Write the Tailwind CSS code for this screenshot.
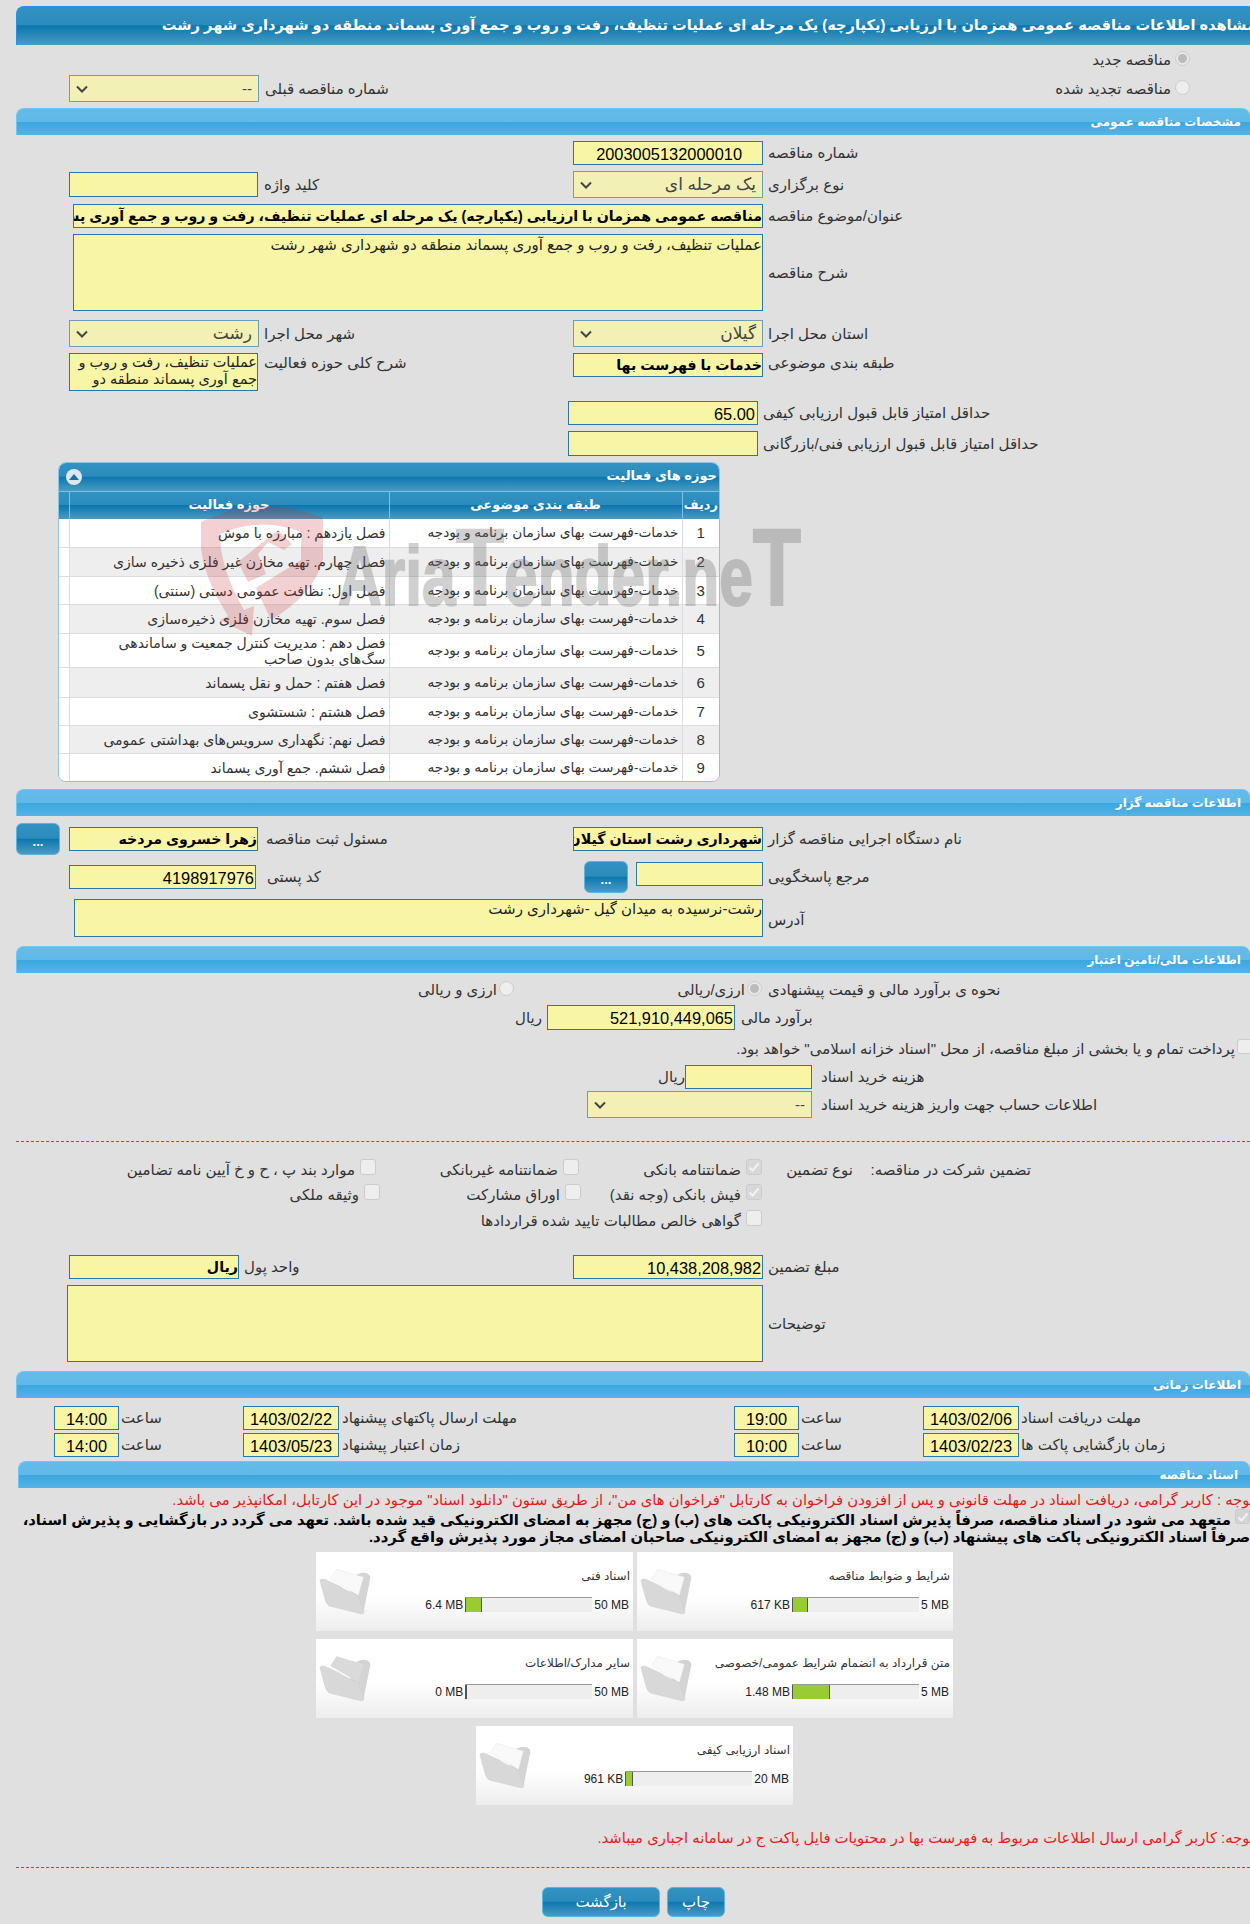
<!DOCTYPE html>
<html lang="fa" dir="rtl">
<head>
  <meta charset="UTF-8" />
  <title>مشاهده اطلاعات مناقصه</title>
  <script src="https://cdn.jsdelivr.net/npm/@tailwindcss/browser@4"></script>
</head>
<body class="bg-[#e0e0e0]">
<div class="relative w-[1250px] h-[1924px] overflow-hidden bg-[#e0e0e0] text-[#333] text-[15px] leading-[18px] font-['Liberation_Sans','DejaVu_Sans',sans-serif]">

  <!-- page title -->
  <div class="mt-[6px] ml-4 -mr-[6px] h-[39px] rounded-t-[8px] border-t border-l border-[#2a8fe0] bg-[linear-gradient(#3292c1_0%,#2b8cbc_48%,#0a76ae_49%,#4b9bc3_100%)] text-white font-bold text-[14.6px] leading-[36px] whitespace-nowrap overflow-hidden">مشاهده اطلاعات مناقصه عمومی همزمان با ارزیابی (یکپارچه) یک مرحله ای عملیات تنظیف، رفت و روب و جمع آوری پسماند منطقه دو شهرداری شهر رشت</div>

  <div class="flex h-[63px]">
    <div class="pr-[60px] pt-0 w-[500px]">
      <div class="flex items-center h-[29px] gap-[4px]"><span class="w-[15px] h-[15px] -mt-[3px] rounded-full border border-[#ccc] bg-[#e8e8e8] flex items-center justify-center"><span class="w-[9px] h-[9px] rounded-full bg-[#bbb]"></span></span><span>مناقصه جدید</span></div>
      <div class="flex items-center h-[29px] gap-[4px]"><span class="w-[15px] h-[15px] -mt-[3px] rounded-full border border-[#ccc] bg-[#eee]"></span><span>مناقصه تجدید شده</span></div>
    </div>
    <div class="mr-[241px] mt-[30px] grid grid-cols-[auto_190px] w-[440px] h-[27px]">
      <div class="text-left pl-[6px] self-center"><span>شماره مناقصه قبلی</span></div>
      <div class="h-[27px] border border-[#6d9cb8] bg-[#f3f0b5] text-[#444] flex items-center justify-between pr-[6px] pl-[6px]"><span>--</span><svg width="12" height="8" viewBox="0 0 12 8"><path d="M1 1.5 6 6.5 11 1.5" fill="none" stroke="#444" stroke-width="2"/></svg></div>
    </div>
  </div>

  <div class="ml-4 h-[27px] rounded-t-[8px] border-t border-l border-[#6fc6f0] bg-[linear-gradient(#64bbe9_0%,#60b9e8_49%,#3aa7e0_50%,#55b3e5_100%)] text-white font-bold text-[12px] leading-[26px] pr-[9px]">مشخصات مناقصه عمومی</div>

  <div class="grid grid-cols-[487px_190px] mt-[6px] h-[24px]">
    <div class="text-left pl-[5px] self-center">شماره مناقصه</div>
    <div class="h-[24px] border border-[#2a76ad] bg-[#f8f6a5] text-black text-[16.4px] leading-[24px] pr-[20px] text-right">2003005132000010</div>
  </div>

  <div class="grid grid-cols-[487px_190px_314px_190px] mt-[6px] h-[27px]">
    <div class="text-left pl-[5px] self-center">نوع برگزاری</div>
    <div class="h-[27px] border border-[#6d9cb8] bg-[#f3f0b5] text-[#444] text-[17px] flex items-center justify-between px-[6px]"><span>یک مرحله ای</span><svg width="12" height="8" viewBox="0 0 12 8"><path d="M1 1.5 6 6.5 11 1.5" fill="none" stroke="#444" stroke-width="2"/></svg></div>
    <div class="text-left pl-[5px] self-center">کلید واژه</div>
    <div class="h-[25px] w-[189px] self-center justify-self-end border border-[#2a76ad] bg-[#f8f6a5]"></div>
  </div>

  <div class="grid grid-cols-[487px_690px] mt-[6px] h-[24px]">
    <div class="text-left pl-[5px] self-center">عنوان/موضوع مناقصه</div>
    <div class="h-[24px] border border-[#2a76ad] bg-[#f8f6a5] text-black font-bold text-[14.2px] leading-[22px] overflow-hidden whitespace-nowrap">مناقصه عمومی همزمان با ارزیابی (یکپارچه) یک مرحله ای عملیات تنظیف، رفت و روب و جمع آوری پسماند منطقه دو شهرداری شهر رشت</div>
  </div>

  <div class="grid grid-cols-[487px_690px] mt-[6px] h-[77px]">
    <div class="text-left pl-[5px] self-center">شرح مناقصه</div>
    <div class="h-[77px] border border-[#2a76ad] bg-[#f8f6a5] text-[#222] leading-[20px]">عملیات تنظیف، رفت و روب و جمع آوری پسماند منطقه دو شهرداری شهر رشت</div>
  </div>

  <div class="grid grid-cols-[487px_190px_314px_190px] mt-[9px] h-[27px]">
    <div class="text-left pl-[5px] self-center">استان محل اجرا</div>
    <div class="h-[27px] border border-[#6d9cb8] bg-[#f3f0b5] text-[#444] text-[17px] flex items-center justify-between px-[6px]"><span>گیلان</span><svg width="12" height="8" viewBox="0 0 12 8"><path d="M1 1.5 6 6.5 11 1.5" fill="none" stroke="#444" stroke-width="2"/></svg></div>
    <div class="text-left pl-[5px] self-center">شهر محل اجرا</div>
    <div class="h-[27px] border border-[#6d9cb8] bg-[#f3f0b5] text-[#444] text-[17px] flex items-center justify-between px-[6px]"><span>رشت</span><svg width="12" height="8" viewBox="0 0 12 8"><path d="M1 1.5 6 6.5 11 1.5" fill="none" stroke="#444" stroke-width="2"/></svg></div>
  </div>

  <div class="grid grid-cols-[487px_190px_314px_190px] mt-[6px] h-[38px]">
    <div class="text-left pl-[5px] pt-[1px]">طبقه بندی موضوعی</div>
    <div class="h-[24px] border border-[#2a76ad] bg-[#f8f6a5] text-black font-bold text-[14.2px] leading-[22px] overflow-hidden whitespace-nowrap">خدمات با فهرست بها</div>
    <div class="text-left pl-[5px] pt-[1px]">شرح کلی حوزه فعالیت</div>
    <div class="h-[38px] w-[189px] justify-self-end border border-[#2a76ad] bg-[#f8f6a5] text-[#222] text-[14.5px] leading-[17px] overflow-hidden">عملیات تنظیف، رفت و روب و جمع آوری پسماند منطقه دو</div>
  </div>

  <div class="grid grid-cols-[492px_190px] mt-[10px] h-[24px]">
    <div class="text-left pl-[5px] self-center">حداقل امتیاز قابل قبول ارزیابی کیفی</div>
    <div class="h-[24px] border border-[#2a76ad] bg-[#f8f6a5] text-black text-[16.4px] leading-[24px] px-[2px]" dir="ltr"><span class="block text-right">65.00</span></div>
  </div>
  <div class="grid grid-cols-[492px_190px] mt-[6px] h-[25px]">
    <div class="text-left pl-[5px] self-center">حداقل امتیاز قابل قبول ارزیابی فنی/بازرگانی</div>
    <div class="h-[25px] border border-[#2a76ad] bg-[#f8f6a5]"></div>
  </div>

  <!-- activity table -->
  <div class="relative mt-[6px] mr-[530px] w-[662px] h-[320px] rounded-[8px] border border-[#8cc4e8] overflow-hidden bg-white">
    <div class="h-[28px] flex items-center justify-between px-[2px] bg-[linear-gradient(#3292c1_0%,#2b8cbc_48%,#0a76ae_49%,#4b9bc3_100%)] text-white font-bold text-[13px]">
      <span class="pb-[2px]">حوزه های فعالیت</span>
      <span class="w-[16px] h-[16px] ml-[5px] rounded-full bg-[#dfe6ef] flex items-center justify-center"><svg width="10" height="6" viewBox="0 0 10 6"><path d="M5 0 10 6H0Z" fill="#1c6fa6"/></svg></span>
    </div>
    <table class="w-full table-fixed border-collapse">
      <thead>
        <tr class="h-[27px] bg-[linear-gradient(#3292c1_0%,#2b8cbc_48%,#0a76ae_49%,#4b9bc3_100%)] text-white font-bold text-[13px]">
          <th class="w-[37px] border-l border-t border-[#7cc0ea] font-bold">ردیف</th>
          <th class="w-[293px] border-l border-t border-[#7cc0ea] font-bold">طبقه بندی موضوعی</th>
          <th class="w-[320px] border-l border-t border-[#7cc0ea] font-bold">حوزه فعالیت</th>
          <th class="border-t border-[#7cc0ea]"></th>
        </tr>
      </thead>
      <tbody id="rows"></tbody>
    </table>
  </div>

  <div class="mt-[7px] ml-4 h-[27px] rounded-t-[8px] border-t border-l border-[#6fc6f0] bg-[linear-gradient(#64bbe9_0%,#60b9e8_49%,#3aa7e0_50%,#55b3e5_100%)] text-white font-bold text-[12px] leading-[26px] pr-[9px]">اطلاعات مناقصه گزار</div>

  <div class="grid grid-cols-[487px_190px_314px_190px_9px_44px] mt-[7px] h-[32px] items-center">
    <div class="text-left pl-[5px]">نام دستگاه اجرایی مناقصه گزار</div>
    <div class="h-[24px] border border-[#2a76ad] bg-[#f8f6a5] text-black font-bold text-[14.2px] leading-[22px] overflow-hidden whitespace-nowrap">شهرداری رشت استان گیلان</div>
    <div class="text-left pl-[7px]">مسئول ثبت مناقصه</div>
    <div class="h-[24px] w-[189px] justify-self-end border border-[#2a76ad] bg-[#f8f6a5] text-black font-bold text-[14.2px] leading-[22px] overflow-hidden whitespace-nowrap">زهرا خسروی مردخه</div>
    <div></div>
    <div class="h-[32px] rounded-[6px] border border-[#5cb4de] bg-[linear-gradient(#3292c1_0%,#2b8cbc_48%,#0a76ae_49%,#4b9bc3_100%)] text-white font-bold text-[13px] text-center leading-[36px]">...</div>
  </div>

  <div class="grid grid-cols-[487px_127px_8px_44px_328px_187px] mt-[6px] h-[32px]">
    <div class="text-left pl-[5px] self-center">مرجع پاسخگویی</div>
    <div class="h-[24px] mt-[1px] border border-[#2a76ad] bg-[#f8f6a5]"></div>
    <div></div>
    <div class="h-[32px] rounded-[6px] border border-[#5cb4de] bg-[linear-gradient(#3292c1_0%,#2b8cbc_48%,#0a76ae_49%,#4b9bc3_100%)] text-white font-bold text-[13px] text-center leading-[36px]">...</div>
    <div class="text-left pl-[11px] self-center">کد پستی</div>
    <div class="h-[24px] self-center border border-[#2a76ad] bg-[#f8f6a5] text-black text-[16.4px] leading-[24px] px-[1px]">4198917976</div>
  </div>

  <div class="grid grid-cols-[487px_689px] mt-[6px] h-[38px]">
    <div class="text-left pl-[5px] pt-[12px]">آدرس</div>
    <div class="h-[38px] border border-[#2a76ad] bg-[#f8f6a5] text-[#222]">رشت-نرسیده به میدان گیل -شهرداری رشت</div>
  </div>

  <div class="mt-[9px] ml-4 h-[27px] rounded-t-[8px] border-t border-l border-[#6fc6f0] bg-[linear-gradient(#64bbe9_0%,#60b9e8_49%,#3aa7e0_50%,#55b3e5_100%)] text-white font-bold text-[12px] leading-[26px] pr-[9px]">اطلاعات مالی/تامین اعتبار</div>

  <div class="grid grid-cols-[482px_250px_auto] mt-[8px] h-[17px] items-center">
    <div class="text-left pl-0">نحوه ی برآورد مالی و قیمت پیشنهادی</div>
    <div class="flex items-center gap-[2px] pr-[6px]"><span class="w-[15px] h-[15px] -mt-[3px] rounded-full border border-[#ccc] bg-[#e8e8e8] flex items-center justify-center"><span class="w-[9px] h-[9px] rounded-full bg-[#bbb]"></span></span><span>ارزی/ریالی</span></div>
    <div class="flex items-center gap-[2px] pr-[4px]"><span class="w-[15px] h-[15px] -mt-[3px] rounded-full border border-[#ccc] bg-[#eee]"></span><span>ارزی و ریالی</span></div>
  </div>

  <div class="grid grid-cols-[515px_188px_auto] mt-[7px] h-[25px] items-center">
    <div class="text-left pl-[6px]">برآورد مالی</div>
    <div class="h-[25px] border border-[#2a76ad] bg-[#f8f6a5] text-black text-[16.4px] leading-[24px] px-[1px]" dir="ltr"><span class="block text-right">521,910,449,065</span></div>
    <div class="pr-[5px]">ریال</div>
  </div>

  <div class="flex mt-[8px] h-[22px] items-center -mr-[2px] gap-[2px]">
    <span class="w-[15px] h-[15px] -mt-[6px] rounded-[3px] border border-[#ccc] bg-[#eee]"></span>
    <span>پرداخت تمام و یا بخشی از مبلغ مناقصه، از محل "اسناد خزانه اسلامی" خواهد بود.</span>
  </div>

  <div class="grid grid-cols-[438px_127px_auto] mt-[5px] h-[24px] items-center">
    <div class="text-left pl-[9px]">هزینه خرید اسناد</div>
    <div class="h-[24px] border border-[#2a76ad] bg-[#f8f6a5]"></div>
    <div>ریال</div>
  </div>

  <div class="grid grid-cols-[438px_225px] mt-[2px] h-[27px] items-center">
    <div class="text-left pl-[9px]">اطلاعات حساب جهت واریز هزینه خرید اسناد</div>
    <div class="h-[27px] border border-[#6d9cb8] bg-[#f3f0b5] text-[#444] flex items-center justify-between px-[6px]"><span>--</span><svg width="12" height="8" viewBox="0 0 12 8"><path d="M1 1.5 6 6.5 11 1.5" fill="none" stroke="#444" stroke-width="2"/></svg></div>
  </div>

  <div class="mt-[23px] ml-4 border-t border-dashed border-[#2a76ad]"></div>

  <!-- guarantee checkboxes -->
  <div class="grid grid-cols-[377px_111px_183px_203px_auto] mt-[17px] h-[25px]">
    <div class="pr-[219px] whitespace-nowrap text-left pl-0 pt-[2px]">تضمین شرکت در مناقصه:</div>
    <div class="pr-[20px] pt-[2px]">نوع تضمین</div>
    <div class="flex gap-[5px]"><span class="w-[16px] h-[16px] rounded-[3px] border border-[#ccc] bg-[#d8d8d8] flex items-center justify-center"><svg width="12" height="10" viewBox="0 0 12 10"><path d="M1.5 5.5 4.5 8.5 10.5 1.5" fill="none" stroke="#f2f2f2" stroke-width="2"/></svg></span><span class="pt-[2px]">ضمانتنامه بانکی</span></div>
    <div class="flex gap-[5px]"><span class="w-[16px] h-[16px] rounded-[3px] border border-[#ccc] bg-[#eee]"></span><span class="pt-[2px]">ضمانتنامه غیربانکی</span></div>
    <div class="flex gap-[5px]"><span class="w-[16px] h-[16px] rounded-[3px] border border-[#ccc] bg-[#eee]"></span><span class="pt-[2px]">موارد بند پ ، ح و خ آیین نامه تضامین</span></div>
  </div>
  <div class="grid grid-cols-[488px_181px_201px_auto] h-[26px]">
    <div></div>
    <div class="flex gap-[5px]"><span class="w-[16px] h-[16px] rounded-[3px] border border-[#ccc] bg-[#d8d8d8] flex items-center justify-center"><svg width="12" height="10" viewBox="0 0 12 10"><path d="M1.5 5.5 4.5 8.5 10.5 1.5" fill="none" stroke="#f2f2f2" stroke-width="2"/></svg></span><span class="pt-[2px]">فیش بانکی (وجه نقد)</span></div>
    <div class="flex gap-[5px]"><span class="w-[16px] h-[16px] rounded-[3px] border border-[#ccc] bg-[#eee]"></span><span class="pt-[2px]">اوراق مشارکت</span></div>
    <div class="flex gap-[5px]"><span class="w-[16px] h-[16px] rounded-[3px] border border-[#ccc] bg-[#eee]"></span><span class="pt-[2px]">وثیقه ملکی</span></div>
  </div>
  <div class="grid grid-cols-[488px_auto] h-[25px]">
    <div></div>
    <div class="flex gap-[5px]"><span class="w-[16px] h-[16px] rounded-[3px] border border-[#ccc] bg-[#eee]"></span><span class="pt-[2px]">گواهی خالص مطالبات تایید شده قراردادها</span></div>
  </div>

  <div class="grid grid-cols-[487px_190px_334px_170px] mt-[20px] h-[24px]">
    <div class="text-left pl-[5px] self-center">مبلغ تضمین</div>
    <div class="h-[24px] border border-[#2a76ad] bg-[#f8f6a5] text-black text-[16.4px] leading-[24px] px-[1px]" dir="ltr"><span class="block text-right">10,438,208,982</span></div>
    <div class="text-left pl-[5px] self-center">واحد پول</div>
    <div class="h-[24px] border border-[#2a76ad] bg-[#f8f6a5] text-black font-bold text-[14.2px] leading-[22px]">ریال</div>
  </div>

  <div class="grid grid-cols-[487px_696px] mt-[6px] h-[77px]">
    <div class="text-left pl-[5px] self-center">توضیحات</div>
    <div class="h-[77px] border border-[#2a76ad] bg-[#f8f6a5]"></div>
  </div>

  <div class="mt-[9px] ml-4 h-[27px] rounded-t-[8px] border-t border-l border-[#6fc6f0] bg-[linear-gradient(#64bbe9_0%,#60b9e8_49%,#3aa7e0_50%,#55b3e5_100%)] text-white font-bold text-[12px] leading-[26px] pr-[9px]">اطلاعات زمانی</div>

  <div class="grid grid-cols-[231px_96px_124px_65px_395px_96px_124px_65px] mt-[8px] h-[24px] items-center">
    <div class="text-left pl-[2px]">مهلت دریافت اسناد</div>
    <div class="h-[24px] border border-[#2a76ad] bg-[#f8f6a5] text-black text-[16.4px] leading-[24px] text-center" dir="ltr">1403/02/06</div>
    <div class="text-left pl-[2px]">ساعت</div>
    <div class="h-[24px] border border-[#2a76ad] bg-[#f8f6a5] text-black text-[16.4px] leading-[24px] text-center" dir="ltr">19:00</div>
    <div class="text-left pl-[3px]">مهلت ارسال پاکتهای پیشنهاد</div>
    <div class="h-[24px] border border-[#2a76ad] bg-[#f8f6a5] text-black text-[16.4px] leading-[24px] text-center" dir="ltr">1403/02/22</div>
    <div class="text-left pl-[2px]">ساعت</div>
    <div class="h-[24px] border border-[#2a76ad] bg-[#f8f6a5] text-black text-[16.4px] leading-[24px] text-center" dir="ltr">14:00</div>
  </div>
  <div class="grid grid-cols-[231px_96px_124px_65px_395px_96px_124px_65px] mt-[3px] h-[24px] items-center">
    <div class="text-left pl-[2px]">زمان بازگشایی پاکت ها</div>
    <div class="h-[24px] border border-[#2a76ad] bg-[#f8f6a5] text-black text-[16.4px] leading-[24px] text-center" dir="ltr">1403/02/23</div>
    <div class="text-left pl-[2px]">ساعت</div>
    <div class="h-[24px] border border-[#2a76ad] bg-[#f8f6a5] text-black text-[16.4px] leading-[24px] text-center" dir="ltr">10:00</div>
    <div class="text-left pl-[3px]">زمان اعتبار پیشنهاد</div>
    <div class="h-[24px] border border-[#2a76ad] bg-[#f8f6a5] text-black text-[16.4px] leading-[24px] text-center" dir="ltr">1403/05/23</div>
    <div class="text-left pl-[2px]">ساعت</div>
    <div class="h-[24px] border border-[#2a76ad] bg-[#f8f6a5] text-black text-[16.4px] leading-[24px] text-center" dir="ltr">14:00</div>
  </div>

  <div class="mt-[4px] ml-[18px] h-[27px] rounded-t-[8px] border-t border-l border-[#6fc6f0] bg-[linear-gradient(#64bbe9_0%,#60b9e8_49%,#3aa7e0_50%,#55b3e5_100%)] text-white font-bold text-[12px] leading-[26px] pr-[12px]">اسناد مناقصه</div>

  <div class="mt-[3px] h-[18px] -mr-[4px] text-[14.8px] text-[#e01b1b] whitespace-nowrap">توجه : کاربر گرامی، دریافت اسناد در مهلت قانونی و پس از افزودن فراخوان به کارتابل "فراخوان های من"، از طریق ستون "دانلود اسناد" موجود در این کارتابل، امکانپذیر می باشد.</div>

  <div class="relative mt-[3px] h-[34px] font-bold text-black text-[14.8px] leading-[17px] whitespace-nowrap">
    <span class="absolute right-0 -top-[3px] w-[15px] h-[15px] rounded-[3px] border border-[#ccc] bg-[#d4d4d4] flex items-center justify-center"><svg width="12" height="10" viewBox="0 0 12 10"><path d="M1.5 5.5 4.5 8.5 10.5 1.5" fill="none" stroke="#f2f2f2" stroke-width="2"/></svg></span>
    <div class="pr-[19px]">متعهد می شود در اسناد مناقصه، صرفاً پذیرش اسناد الکترونیکی پاکت های (ب) و (ج) مجهز به امضای الکترونیکی قید شده باشد. تعهد می گردد در بازگشایی و پذیرش اسناد،</div>
    <div>صرفاً اسناد الکترونیکی پاکت های پیشنهاد (ب) و (ج) مجهز به امضای الکترونیکی صاحبان امضای مجاز مورد پذیرش واقع گردد.</div>
  </div>

  <!-- document cards -->
  <div id="cards" class="mt-[6px] mr-[297px] w-[637px] grid grid-cols-[316px_317px] gap-x-[4px] gap-y-[8px]"></div>
  <div id="lastcard" class="mt-[8px] mr-[457px] w-[317px]"></div>

  <div class="mt-[24px] h-[18px] -mr-[4px] text-[14.8px] text-[#ee1c1c] whitespace-nowrap">توجه: کاربر گرامی ارسال اطلاعات مربوط به فهرست بها در محتویات فایل پاکت ج در سامانه اجباری میباشد.</div>

  <div class="mt-[20px] ml-4 border-t border-dashed border-[#2a76ad]"></div>

  <div class="flex mt-[19px] mr-[525px] gap-[7px]">
    <div class="w-[58px] h-[30px] rounded-[6px] border border-[#5cb4de] bg-[linear-gradient(#3292c1_0%,#2b8cbc_48%,#0a76ae_49%,#4b9bc3_100%)] text-white text-[15px] leading-[28px] text-center">چاپ</div>
    <div class="w-[118px] h-[30px] rounded-[6px] border border-[#5cb4de] bg-[linear-gradient(#3292c1_0%,#2b8cbc_48%,#0a76ae_49%,#4b9bc3_100%)] text-white text-[15px] leading-[28px] text-center">بازگشت</div>
  </div>

  <!-- watermark over the table -->
  <svg class="absolute left-[196px] top-[498px] pointer-events-none" width="132" height="140" viewBox="0 0 132 140">
    <path d="M5 24Q66 -6 127 20V60Q120 95 75 122L60 90L105 62V34Q66 18 24 36Q24 70 48 112L58 108L56 138L24 122L32 118Q8 80 5 50Z" fill="#c8282d" opacity=".22"/>
    <path d="M42 64 82 32 96 46 88 52 72 44 62 56 70 76 52 84Z" fill="#c8282d" opacity=".22"/>
  </svg>
  <div class="absolute left-[338px] top-[517px] h-[100px] w-[640px] origin-left scale-x-[.72] whitespace-nowrap text-[#666] opacity-30 [-webkit-text-stroke:2px_#666] font-bold text-[84px] leading-[100px] font-['Liberation_Sans',sans-serif] pointer-events-none" dir="ltr">Aria<span class="text-[110px]">T</span>ender.ne<span class="text-[110px]">T</span></div>
</div>

<script>
  const rows = [
    ['فصل یازدهم : مبارزه با موش', 'h-[29px]'],
    ['فصل چهارم. تهیه مخازن غیر فلزی ذخیره سازی', 'h-[29px]'],
    ['فصل اول: نظافت عمومی دستی (سنتی)', 'h-[28px]'],
    ['فصل سوم. تهیه مخازن فلزی ذخیره‌سازی', 'h-[29px]'],
    ['فصل دهم : مدیریت کنترل جمعیت و ساماندهی سگ‌های بدون صاحب', 'h-[34px]'],
    ['فصل هفتم : حمل و نقل پسماند', 'h-[30px]'],
    ['فصل هشتم : شستشوی', 'h-[28px]'],
    ['فصل نهم: نگهداری سرویس‌های بهداشتی عمومی', 'h-[28px]'],
    ['فصل ششم. جمع آوری پسماند', 'h-[29px]'],
  ]
  document.getElementById('rows').innerHTML = rows.map((r, i) => `
    <tr class="${r[1]} ${i % 2 ? 'bg-[#eeeeee]' : 'bg-white'} border-b border-[#dddddd] text-[14px]">
      <td class="text-center text-[15px] border-l border-[#dddddd]">${i + 1}</td>
      <td class="pr-[3px] text-[13.7px] border-l border-[#dddddd] whitespace-nowrap">خدمات-فهرست بهای سازمان برنامه و بودجه</td>
      <td class="pr-[3px] pl-[20px] leading-[16px] border-l border-[#dddddd]">${r[0]}</td>
      <td class="bg-white"></td>
    </tr>`).join('')

  const folder = paper => `
    <svg class="mt-[16px] shrink-0 ml-[3px]" width="53" height="47" viewBox="33 68 157 140">
      <path d="M85 72 140 90Q160 78 178 85 190 92 183 110L165 200Z" fill="#d4d4d4"/>
      ${paper ? '<path d="M85 72 66 100 150 150 165 95 140 88Z" fill="#f9f9f9" stroke="#e2e2e2"/>' : '<path d="M85 72 66 100 150 150 165 95 140 88Z" fill="#dadada"/>'}
      <path d="M35 105Q40 98 52 102L95 122Q100 128 148 150L167 198Q165 208 150 203L65 182Q55 178 50 160Z" fill="#d8d8d8" stroke="#c8c8c8"/>
    </svg>`

  const card = (title, max, used, pct, paper) => `
    <div class="flex h-full min-h-[79px] bg-[linear-gradient(#ffffff_55%,#ededed_100%)]">
      <div class="flex-1 pr-[3px] pl-0 pt-[15px]">
        <div class="h-[18px] text-[12px]">${title}</div>
        <div class="flex items-center mt-[12px] h-[15px] text-[12px] text-[#222] font-['Liberation_Sans',sans-serif]">
          <span class="pr-[1px] pl-[2px]" dir="ltr">${max}</span>
          <div class="w-[127px] h-[15px] bg-[#eeeeee] border-t border-[#999] flex" dir="ltr">
            <div class="bg-[#99cc33] border-x border-[#555] h-full" style="width:${pct}%"></div>
          </div>
          <span class="pr-[2px]" dir="ltr">${used}</span>
        </div>
      </div>
      ${folder(paper)}
    </div>`

  document.getElementById('cards').innerHTML =
    card('شرایط و ضوابط مناقصه', '5 MB', '617 KB', 13, true) +
    card('اسناد فنی', '50 MB', '6.4 MB', 13, true) +
    card('متن قرارداد به انضمام شرایط عمومی/خصوصی', '5 MB', '1.48 MB', 30, true) +
    card('سایر مدارک/اطلاعات', '50 MB', '0 MB', 0, false)
  document.getElementById('lastcard').innerHTML = card('اسناد ارزیابی کیفی', '20 MB', '961 KB', 6, true)
</script>
</body>
</html>
